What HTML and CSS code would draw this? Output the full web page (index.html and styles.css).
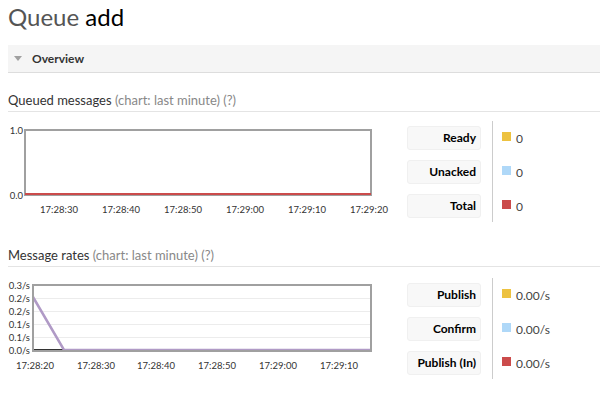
FILE: index.html
```html
<!DOCTYPE html>
<html lang="en">
<head>
    <meta charset="UTF-8">
    <title>Queue add</title>
    <link rel="stylesheet" href="styles.css">
</head>
<body>

    <h1><span class="muted">Queue</span> add</h1>

    <div class="section">
        <div class="section-head"><span class="arrow"></span>Overview</div>

        <h3>Queued messages <span class="help">(chart: last minute) (?)</span></h3>
        <div class="row">
            <svg class="chart" width="399" height="100" viewBox="0 0 399 100">
                <rect x="17" y="9" width="346" height="65" fill="#fff" stroke="#a0a0a0" stroke-width="2"/>
                <line x1="17" y1="73" x2="363" y2="73" stroke="#cb4b4b" stroke-width="2"/>
                <g class="ylab" text-anchor="end">
                    <text x="15" y="13">1.0</text>
                    <text x="15" y="78">0.0</text>
                </g>
                <g class="xlab" text-anchor="middle">
                    <text x="51" y="92">17:28:30</text>
                    <text x="113" y="92">17:28:40</text>
                    <text x="175" y="92">17:28:50</text>
                    <text x="237" y="92">17:29:00</text>
                    <text x="299" y="92">17:29:10</text>
                    <text x="361" y="92">17:29:20</text>
                </g>
            </svg>
            <div class="legend">
                <div class="legend-labels">
                    <div class="tag">Ready</div>
                    <div class="tag">Unacked</div>
                    <div class="tag">Total</div>
                </div>
                <div class="legend-values">
                    <div class="val"><span class="swatch yellow"></span>0</div>
                    <div class="val"><span class="swatch blue"></span>0</div>
                    <div class="val"><span class="swatch red"></span>0</div>
                </div>
            </div>
        </div>

        <h3 class="next">Message rates <span class="help">(chart: last minute) (?)</span></h3>
        <div class="row rates">
            <svg class="chart" width="399" height="100" viewBox="0 0 399 100">
                <rect x="25" y="7" width="338" height="66" fill="#fff"/>
                <g stroke="#ececec" stroke-width="1">
                    <line x1="25" y1="20.5" x2="363" y2="20.5"/>
                    <line x1="25" y1="33.5" x2="363" y2="33.5"/>
                    <line x1="25" y1="46.5" x2="363" y2="46.5"/>
                    <line x1="25" y1="59.5" x2="363" y2="59.5"/>
                </g>
                <line x1="25" y1="72" x2="56" y2="72" stroke="#333" stroke-width="2"/>
                <polyline points="25,19 56,72 363,72" fill="none" stroke="#b09ac6" stroke-width="2.5"/>
                <rect x="25" y="7" width="338" height="66" fill="none" stroke="#a0a0a0" stroke-width="2"/>
                <g class="ylab" text-anchor="end">
                    <text x="22" y="11">0.3/s</text>
                    <text x="22" y="24">0.2/s</text>
                    <text x="22" y="37">0.2/s</text>
                    <text x="22" y="50">0.1/s</text>
                    <text x="22" y="63">0.1/s</text>
                    <text x="22" y="76">0.0/s</text>
                </g>
                <g class="xlab" text-anchor="middle">
                    <text x="27" y="91">17:28:20</text>
                    <text x="88" y="91">17:28:30</text>
                    <text x="148" y="91">17:28:40</text>
                    <text x="209" y="91">17:28:50</text>
                    <text x="270" y="91">17:29:00</text>
                    <text x="331" y="91">17:29:10</text>
                </g>
            </svg>
            <div class="legend">
                <div class="legend-labels">
                    <div class="tag">Publish</div>
                    <div class="tag">Confirm</div>
                    <div class="tag">Publish (In)</div>
                </div>
                <div class="legend-values">
                    <div class="val"><span class="swatch yellow"></span>0.00/s</div>
                    <div class="val"><span class="swatch blue"></span>0.00/s</div>
                    <div class="val"><span class="swatch red"></span>0.00/s</div>
                </div>
            </div>
        </div>
    </div>

</body>
</html>
```
FILE: styles.css
```css
body {
    font-family: Lato, "Open Sans", sans-serif;
    color: #333;
    background: #fff;
    margin: 0 0 0 8px;
    overflow: hidden;
}
h1 {
    font-size: 24px;
    font-weight: normal;
    color: #000;
    margin: 2px 0 0 0;
    line-height: 30px;
}
h1 .muted {
    color: #555;
}
.section-head {
    margin-top: 13px;
    height: 27px;
    background-color: #f5f5f5;
    border-bottom: 1px solid #ddd;
    font-size: 12px;
    font-weight: bold;
    color: #333;
    display: flex;
    align-items: center;
}
.arrow {
    width: 0;
    height: 0;
    border-left: 4px solid transparent;
    border-right: 4px solid transparent;
    border-top: 5px solid #a0a0a0;
    margin: 0 10px 0 6px;
}
h3 {
    font-size: 13px;
    font-weight: normal;
    color: #333;
    margin: 19px 0 0 0;
    padding-bottom: 3px;
    border-bottom: 1px solid #e4e4e4;
}
h3.next {
    margin-top: 25px;
}
.help {
    color: #888;
}
.row {
    display: flex;
    margin-top: 9px;
}
.row.rates {
    margin-top: 11px;
}
.chart {
    display: block;
    flex: none;
}
.ylab, .xlab {
    font-family: Lato, "Open Sans", sans-serif;
    font-size: 9.5px;
    fill: #333;
}
.legend {
    display: flex;
    align-self: flex-start;
}
.legend-labels {
    display: flex;
    flex-direction: column;
    gap: 10px;
    padding: 5px 0 4px;
}
.tag {
    width: 74px;
    height: 24px;
    box-sizing: border-box;
    background-color: #f8f8f8;
    border: 1px solid #f0f0f0;
    border-radius: 3px;
    font-size: 12px;
    font-weight: bold;
    color: #000;
    text-align: right;
    padding-right: 4px;
    line-height: 22px;
}
.legend-values {
    margin-left: 11px;
    padding: 5px 0 4px 9px;
    border-left: 1px solid #ccc;
    display: flex;
    flex-direction: column;
    gap: 10px;
}
.val {
    height: 24px;
    display: flex;
    align-items: center;
    font-size: 12px;
    color: #444;
}
.swatch {
    width: 9px;
    height: 9px;
    margin-right: 5px;
    margin-top: -4px;
}
.yellow { background-color: #edc240; }
.blue { background-color: #afd8f8; }
.red { background-color: #cb4b4b; }
```
